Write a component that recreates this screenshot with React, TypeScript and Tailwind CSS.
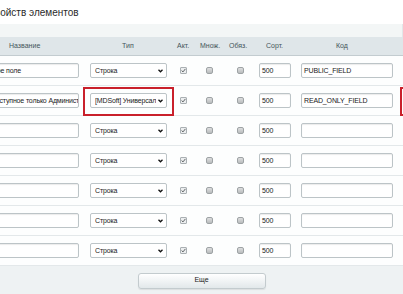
import React from "react";

type Row = {
    name: string;
    type: string;
    code: string;
    mark?: boolean;
};

const rows: Row[] = [
    { name: "Мое поле", type: "Строка", code: "PUBLIC_FIELD" },
    { name: "Доступное только Администратору", type: "[MDSoft] Универсальное свойство", code: "READ_ONLY_FIELD", mark: true },
    { name: "", type: "Строка", code: "" },
    { name: "", type: "Строка", code: "" },
    { name: "", type: "Строка", code: "" },
    { name: "", type: "Строка", code: "" },
    { name: "", type: "Строка", code: "" },
];

const font = { fontFamily: '"Liberation Sans", Arial, sans-serif' };

const CheckedBox = () => (
    <span className="flex w-[7px] h-[7px] items-center justify-center rounded-[1px] border border-[#aab0b3] bg-[#eceeef]">
        <svg width="5" height="5" viewBox="0 0 5 5" fill="none">
            <path d="M0.6 2.6 L2 3.9 L4.4 0.9" stroke="#5f6466" strokeWidth="1" />
        </svg>
    </span>
);

const EmptyBox = () => (
    <span className="block w-[7px] h-[7px] rounded-[2px] border border-[#9ea3a5] bg-gradient-to-b from-[#dedfe0] to-[#b9bcbd]" />
);

const TextField = ({ value, className }: { value: string; className: string }) => (
    <div className={`flex h-[15px] items-center overflow-hidden whitespace-nowrap rounded-[2px] border border-[#bcc4c7] bg-white pl-[2px] text-[7px] leading-[9px] tracking-[-0.15px] text-[#222] shadow-[inset_0_1px_1px_rgba(0,0,0,0.08)] ${className}`}>
        {value}
    </div>
);

const TypeSelect = ({ value }: { value: string }) => (
    <div className="flex h-[15px] w-[77px] items-center rounded-[2px] border border-[#bcc4c7] bg-white pl-[4px] pr-[3px]">
        <span className="flex-1 overflow-hidden whitespace-nowrap text-[7px] leading-[13px] tracking-[-0.15px] text-[#222]">{value}</span>
        <svg width="5" height="4" viewBox="0 0 5 4" className="ml-[2px] shrink-0">
            <path d="M0.5 0.8 L2.5 2.8 L4.5 0.8" stroke="#111" strokeWidth="1.3" fill="none" />
        </svg>
    </div>
);

const App = () => {
    return (
        <div className="w-[403px] h-[294px] overflow-hidden bg-white" style={font}>
            <div className="h-[24px] pt-[7px] -ml-[10px] text-[10px] leading-[12px] text-[#2b2b2b] whitespace-nowrap">
                свойств элементов
            </div>
            <div className="h-[13px] bg-[#f3f6f6] border-r border-[#e2e7e9]" />
            <div className="flex h-[19px] items-center -ml-[12px] w-[415px] bg-[#dfe6e9] border-b border-[#c3ccd0] text-[7px] text-[#44555a]">
                <div className="w-[96px] pl-[21px]">Название</div>
                <div className="w-[90px] pl-[38px]">Тип</div>
                <div className="w-[23px] pl-[3px]">Акт.</div>
                <div className="w-[29px] pl-[3px]">Множ.</div>
                <div className="w-[29px] pl-[3px]">Обяз.</div>
                <div className="w-[42px] pl-[11px]">Сорт.</div>
                <div className="w-[101px] pl-[39px]">Код</div>
            </div>
            {rows.map((row, i) => (
                <div key={i} className="relative flex h-[30px] items-center -ml-[12px] w-[415px] border-b border-[#e3e8ea] bg-[#fdfefe]">
                    <div className="w-[96px]">
                        <TextField value={row.name} className="w-[91px]" />
                    </div>
                    <div className="w-[90px] pl-[6px]">
                        <TypeSelect value={row.type} />
                    </div>
                    <div className="w-[23px] pl-[6px]"><CheckedBox /></div>
                    <div className="w-[29px] pl-[9px]"><EmptyBox /></div>
                    <div className="w-[29px] pl-[11px]"><EmptyBox /></div>
                    <div className="w-[42px] pl-[4px]">
                        <TextField value="500" className="w-[32px]" />
                    </div>
                    <div className="w-[101px] pl-[4px]">
                        <TextField value={row.code} className="w-[92px]" />
                    </div>
                    {row.mark && (
                        <>
                            <div className="absolute left-[95px] top-[1px] w-[91px] h-[29px] border-2 border-[#c9202b]" />
                            <div className="absolute left-[412px] top-[1px] w-[40px] h-[29px] border-2 border-[#c9202b]" />
                        </>
                    )}
                </div>
            ))}
            <div className="flex h-[29px] items-center justify-center bg-[#eef2f3]">
                <button className="h-[16px] w-[128px] rounded-[3px] border border-[#c3cbce] bg-gradient-to-b from-white to-[#e2e8ea] text-[7px] text-[#222] shadow-[0_1px_1px_rgba(0,0,0,0.08)]">
                    Еще
                </button>
            </div>
        </div>
    );
};

export default App;
